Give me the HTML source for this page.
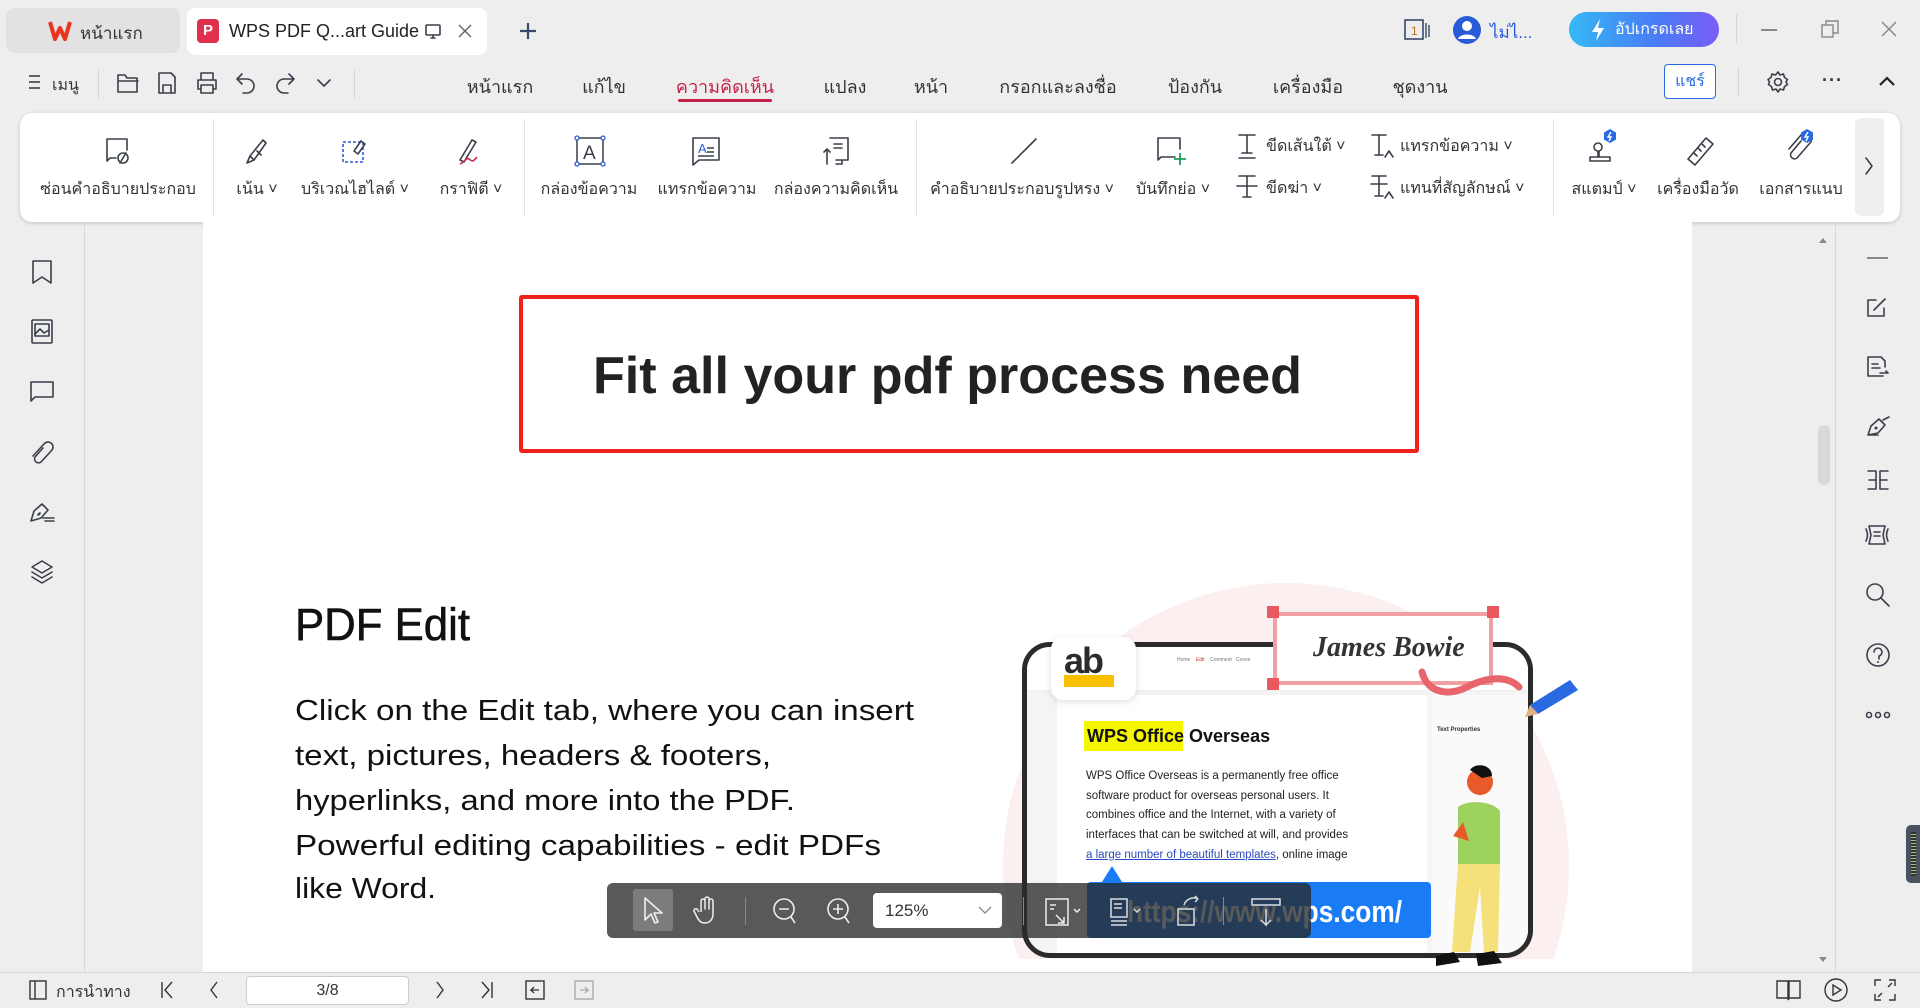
<!DOCTYPE html>
<html><head><meta charset="utf-8">
<style>
*{margin:0;padding:0;box-sizing:border-box}
html{width:1920px;height:1008px;overflow:hidden}
body{width:1920px;height:1008px;overflow:hidden;background:#eeeeee;font-family:"Liberation Sans","Noto Sans CJK SC",sans-serif;color:#333;position:relative}
.a{position:absolute}
.t{position:absolute;white-space:nowrap;transform:translateX(-50%);font-size:16px;color:#333}
svg{position:absolute;overflow:visible}
.ic{fill:none;stroke:#3a3f4a;stroke-width:1.6;stroke-linecap:round;stroke-linejoin:round}
</style></head><body>

<!-- Tab bar -->
<div class="a" style="left:6px;top:8px;width:174px;height:45px;background:#e2e2e2;border-radius:8px"></div>
<svg style="left:48px;top:20px" width="24" height="22" viewBox="0 0 24 22"><path d="M2 2 L7 19 L12 8 L17 19 L22 2" fill="none" stroke="#e8331f" stroke-width="4" stroke-linejoin="round"/></svg>
<div class="a" style="left:80px;top:20px;font-size:17px;color:#333">หน้าแรก</div>
<div class="a" style="left:187px;top:8px;width:300px;height:47px;background:#fff;border-radius:8px"></div>
<div class="a" style="left:197px;top:19px;width:22px;height:24px;background:#e0304d;border-radius:4px;color:#fff;font-weight:bold;font-size:15px;text-align:center;line-height:24px">P</div>
<div class="a" style="left:229px;top:21px;font-size:18px;color:#222">WPS PDF Q...art Guide</div>
<svg style="left:425px;top:24px" width="16" height="16" viewBox="0 0 16 16"><rect x="1" y="1" width="14" height="10" rx="1" class="ic" stroke="#666"/><path d="M6 14h4M8 11v3" class="ic" stroke="#666"/></svg>
<svg style="left:458px;top:24px" width="14" height="14" viewBox="0 0 14 14"><path d="M1 1L13 13M13 1L1 13" stroke="#666" stroke-width="1.5"/></svg>
<svg style="left:519px;top:22px" width="18" height="18" viewBox="0 0 18 18"><path d="M9 1v16M1 9h16" stroke="#3a4a6a" stroke-width="2.2"/></svg>

<!-- top right -->
<svg style="left:1404px;top:19px" width="28" height="22" viewBox="0 0 28 22"><rect x="1" y="1" width="18" height="19" fill="none" stroke="#3a4a6a" stroke-width="1.6"/><text x="7" y="16" font-size="12" fill="#c07020" font-family="Liberation Sans">1</text><path d="M22 4v15M25 6v12" stroke="#3a4a6a" stroke-width="1.4"/></svg>
<svg style="left:1452px;top:15px" width="30" height="30" viewBox="0 0 30 30"><circle cx="15" cy="15" r="14" fill="#2a5bd7"/><circle cx="15" cy="11" r="5" fill="#fff"/><path d="M6 24c2-6 16-6 18 0" fill="#fff"/></svg>
<div class="a" style="left:1490px;top:19px;font-size:17px;color:#2a5bd7">ไม่ไ...</div>
<div class="a" style="left:1569px;top:12px;width:150px;height:35px;border-radius:18px;background:linear-gradient(90deg,#35b8f5,#4a7af5 60%,#7a5cf5);color:#fff;font-size:16px;line-height:35px;padding-left:46px">อัปเกรดเลย</div>
<svg style="left:1590px;top:18px" width="16" height="24" viewBox="0 0 16 24"><path d="M10 1L2 14h6l-2 9 8-13H8z" fill="#fff"/></svg>
<div class="a" style="left:1736px;top:14px;width:1px;height:30px;background:#d8d8d8"></div>
<div class="a" style="left:1761px;top:29px;width:16px;height:1.5px;background:#888"></div>
<svg style="left:1821px;top:20px" width="18" height="18" viewBox="0 0 18 18"><rect x="1" y="5" width="11" height="12" fill="none" stroke="#888" stroke-width="1.4"/><path d="M5 5V1h12v12h-5" fill="none" stroke="#888" stroke-width="1.4"/></svg>
<svg style="left:1881px;top:21px" width="16" height="16" viewBox="0 0 16 16"><path d="M1 1L15 15M15 1L1 15" stroke="#888" stroke-width="1.5"/></svg>

<!-- row 2 -->
<svg style="left:28px;top:74px" width="14" height="16" viewBox="0 0 14 16"><path d="M1 2h11M1 8h11M1 14h11" stroke="#333" stroke-width="1.6"/></svg>
<div class="a" style="left:52px;top:73px;font-size:16px">เมนู</div>
<div class="a" style="left:98px;top:70px;width:1px;height:28px;background:#d5d5d5"></div>
<svg style="left:116px;top:72px" width="24" height="22" viewBox="0 0 24 22"><path d="M2 3h7l2 3h10v14H2z M2 9h20" class="ic"/></svg>
<svg style="left:157px;top:71px" width="20" height="24" viewBox="0 0 20 24"><path d="M2 2h12l4 4v16H2z M6 22v-8h8v8" class="ic" stroke="#aaa"/></svg>
<svg style="left:195px;top:71px" width="24" height="24" viewBox="0 0 24 24"><path d="M6 9V2h12v7 M3 9h18v9h-3 M6 18H3V9 M6 14h12v8H6z" class="ic"/></svg>
<svg style="left:235px;top:72px" width="22" height="22" viewBox="0 0 22 22"><path d="M7 2L2 7l5 5 M2 7h10a7 7 0 0 1 0 14H8" class="ic" stroke="#aaa"/></svg>
<svg style="left:274px;top:72px" width="22" height="22" viewBox="0 0 22 22"><path d="M15 2l5 5-5 5 M20 7H10a7 7 0 0 0 0 14h4" class="ic" stroke="#aaa"/></svg>
<svg style="left:317px;top:78px" width="14" height="10" viewBox="0 0 14 10"><path d="M1 2l6 6 6-6" class="ic"/></svg>
<div class="a" style="left:354px;top:70px;width:1px;height:28px;background:#d5d5d5"></div>

<div class="t" style="left:500px;top:72px;font-size:18px">หน้าแรก</div>
<div class="t" style="left:604px;top:72px;font-size:18px">แก้ไข</div>
<div class="t" style="left:725px;top:72px;font-size:18px;color:#c8224a">ความคิดเห็น</div>
<div class="a" style="left:678px;top:99px;width:94px;height:3px;background:#c8224a;border-radius:2px"></div>
<div class="t" style="left:845px;top:72px;font-size:18px">แปลง</div>
<div class="t" style="left:931px;top:72px;font-size:18px">หน้า</div>
<div class="t" style="left:1058px;top:72px;font-size:18px">กรอกและลงชื่อ</div>
<div class="t" style="left:1195px;top:72px;font-size:18px">ป้องกัน</div>
<div class="t" style="left:1308px;top:72px;font-size:18px">เครื่องมือ</div>
<div class="t" style="left:1420px;top:72px;font-size:18px">ชุดงาน</div>

<div class="a" style="left:1664px;top:64px;width:52px;height:35px;border:1px solid #2a6ae0;border-radius:4px;background:#fff;color:#2a6ae0;font-size:16px;text-align:center;line-height:33px">แชร์</div>
<div class="a" style="left:1738px;top:68px;width:1px;height:28px;background:#d5d5d5"></div>
<svg style="left:1766px;top:70px" width="24" height="24" viewBox="0 0 24 24"><circle cx="12" cy="12" r="3.5" class="ic"/><path d="M12 2l2 3 3.5-1 1 3.5 3 2-1.5 2.5 1.5 2.5-3 2-1 3.5-3.5-1-2 3-2-3-3.5 1-1-3.5-3-2L3.5 12 2 9.5l3-2 1-3.5 3.5 1z" class="ic" stroke-width="1.3"/></svg>
<div class="a" style="left:1822px;top:70px;font-size:18px;letter-spacing:1px;font-weight:bold">···</div>
<svg style="left:1879px;top:76px" width="16" height="10" viewBox="0 0 16 10"><path d="M1 9l7-7 7 7" fill="none" stroke="#222" stroke-width="2.2"/></svg>

<!-- Toolbar panel -->
<div class="a" style="left:20px;top:113px;width:1880px;height:109px;background:#fff;border-radius:12px;box-shadow:0 1px 4px rgba(0,0,0,.18)"></div>
<div class="a" style="left:213px;top:119px;width:1px;height:97px;background:#e2e2e2"></div>
<div class="a" style="left:524px;top:119px;width:1px;height:97px;background:#e2e2e2"></div>
<div class="a" style="left:916px;top:119px;width:1px;height:97px;background:#e2e2e2"></div>
<div class="a" style="left:1553px;top:119px;width:1px;height:97px;background:#e2e2e2"></div>
<div class="a" style="left:1855px;top:118px;width:29px;height:98px;background:#efefef;border-radius:6px"></div>
<svg style="left:1864px;top:157px" width="10" height="18" viewBox="0 0 10 18"><path d="M2 1l6 8-6 8" class="ic"/></svg>

<!-- toolbar icons -->
<svg style="left:104px;top:137px" width="30" height="30" viewBox="0 0 30 30"><path d="M3 24V2h20v11 M3 24l3-3h6" class="ic"/><circle cx="19" cy="21" r="5" class="ic"/><path d="M16 26l6-10" class="ic"/></svg>
<svg style="left:243px;top:136px" width="30" height="30" viewBox="0 0 30 30"><path d="M4 27l3-7 4 4z M7 20L20 4l3 3-12 17 M14 15l4 4" class="ic"/></svg>
<svg style="left:341px;top:136px" width="30" height="30" viewBox="0 0 30 30"><rect x="2" y="6" width="20" height="20" fill="none" stroke="#2a5bd7" stroke-width="1.6" stroke-dasharray="3 2"/><path d="M13 15l7-10 4 3-7 10z" class="ic"/></svg>
<svg style="left:456px;top:136px" width="30" height="30" viewBox="0 0 30 30"><path d="M4 24L16 4l4 2-12 20z" class="ic"/><path d="M4 28c4-1 6-7 9-5s3 4 8-2" fill="none" stroke="#c8224a" stroke-width="1.5"/></svg>
<svg style="left:574px;top:135px" width="32" height="32" viewBox="0 0 32 32"><path d="M3 3h26M3 29h26M3 3v26M29 3v26" stroke="#3a3f4a" stroke-width="1.5"/><text x="9" y="24" font-size="19" fill="#3a3f4a" font-family="Liberation Sans">A</text><g fill="#fff" stroke="#2a5bd7" stroke-width="1.3"><circle cx="3" cy="3" r="2"/><circle cx="29" cy="3" r="2"/><circle cx="3" cy="29" r="2"/><circle cx="29" cy="29" r="2"/></g></svg>
<svg style="left:690px;top:136px" width="32" height="32" viewBox="0 0 32 32"><path d="M3 2h26v22H9l-6 5z" class="ic"/><text x="8" y="17" font-size="13" fill="#2a5bd7" font-family="Liberation Sans">A</text><path d="M17 12h7M17 16h7M8 20h16" stroke="#3a3f4a" stroke-width="1.4"/></svg>
<svg style="left:820px;top:136px" width="32" height="32" viewBox="0 0 32 32"><path d="M10 2h18v22H16 M22 24v4h-6 M14 8h8M14 12h8" class="ic"/><path d="M7 28V13l-3 3M7 13l3 3" class="ic"/></svg>
<svg style="left:1010px;top:137px" width="28" height="28" viewBox="0 0 28 28"><path d="M26 2L2 26" class="ic"/></svg>
<svg style="left:1156px;top:136px" width="32" height="32" viewBox="0 0 32 32"><path d="M24 13V2H2v22l3-3h14" class="ic"/><path d="M24 17v12M18 23h12" stroke="#1a9e5a" stroke-width="1.8"/></svg>
<svg style="left:1236px;top:133px" width="22" height="26" viewBox="0 0 22 26"><path d="M3 2h16M11 2v18M6 20h10M3 25h16" class="ic"/></svg>
<svg style="left:1236px;top:174px" width="22" height="26" viewBox="0 0 22 26"><path d="M3 2h16M11 2v21M1 12h20M7 23h8" class="ic"/></svg>
<svg style="left:1370px;top:133px" width="26" height="26" viewBox="0 0 26 26"><path d="M2 2h14M9 2v20M5 22h8M15 24l4-6 4 6" class="ic"/></svg>
<svg style="left:1370px;top:174px" width="26" height="26" viewBox="0 0 26 26"><path d="M2 2h14M9 2v20M5 22h8M1 10h16M15 24l4-6 4 6" class="ic"/></svg>
<svg style="left:1586px;top:127px" width="36" height="38" viewBox="0 0 36 38"><path d="M12 30v-6a4 4 0 0 1 0-8 4 4 0 0 1 4 4 4 4 0 0 1-3 4v6 M4 30h20v4H4z" class="ic"/><path d="M24 2l6 3.5v7L24 16l-6-3.5v-7z" fill="#2a6ae0"/><path d="M25 5l-3 5h3l-2 4" stroke="#fff" stroke-width="1.4" fill="none"/></svg>
<svg style="left:1684px;top:135px" width="32" height="32" viewBox="0 0 32 32"><path d="M4 24L22 3l7 6-18 21z M10 18l3 3M14 13l3 3M18 9l3 3" class="ic"/></svg>
<svg style="left:1783px;top:127px" width="36" height="38" viewBox="0 0 36 38"><path d="M18 14L8 26a4 4 0 0 0 6 5l13-15a6 6 0 0 0-9-8L6 22" class="ic" stroke-width="1.8"/><path d="M24 2l6 3.5v7L24 16l-6-3.5v-7z" fill="#2a6ae0"/><path d="M25 5l-3 5h3l-2 4" stroke="#fff" stroke-width="1.4" fill="none"/></svg>

<div class="t" style="left:118px;top:177px">ซ่อนคำอธิบายประกอบ</div>
<div class="t" style="left:257px;top:177px">เน้น ˅</div>
<div class="t" style="left:355px;top:177px">บริเวณไฮไลต์ ˅</div>
<div class="t" style="left:471px;top:177px">กราฟิตี ˅</div>
<div class="t" style="left:589px;top:177px">กล่องข้อความ</div>
<div class="t" style="left:707px;top:177px">แทรกข้อความ</div>
<div class="t" style="left:836px;top:177px">กล่องความคิดเห็น</div>
<div class="t" style="left:1022px;top:177px">คำอธิบายประกอบรูปหรง ˅</div>
<div class="t" style="left:1173px;top:177px">บันทึกย่อ ˅</div>
<div class="a" style="left:1266px;top:134px;font-size:16px">ขีดเส้นใต้ ˅</div>
<div class="a" style="left:1266px;top:176px;font-size:16px">ขีดฆ่า ˅</div>
<div class="a" style="left:1400px;top:134px;font-size:16px">แทรกข้อความ ˅</div>
<div class="a" style="left:1400px;top:176px;font-size:16px">แทนที่สัญลักษณ์ ˅</div>
<div class="t" style="left:1604px;top:177px">สแตมป์ ˅</div>
<div class="t" style="left:1698px;top:177px">เครื่องมือวัด</div>
<div class="t" style="left:1801px;top:177px">เอกสารแนบ</div>

<!-- left sidebars -->
<div class="a" style="left:84px;top:222px;width:1px;height:750px;background:#d8d8d8"></div>
<svg style="left:30px;top:259px" width="24" height="26" viewBox="0 0 24 26"><path d="M3 2h18v22l-9-6-9 6z" class="ic"/></svg>
<svg style="left:30px;top:319px" width="24" height="26" viewBox="0 0 24 26"><rect x="2" y="1" width="20" height="23" rx="1" class="ic"/><rect x="5" y="5" width="14" height="12" class="ic"/><path d="M5 15l5-5 4 4 5-3" class="ic"/></svg>
<svg style="left:29px;top:380px" width="26" height="24" viewBox="0 0 26 24"><path d="M2 2h22v15H6l-4 4z" class="ic"/></svg>
<svg style="left:30px;top:440px" width="26" height="26" viewBox="0 0 26 26"><path d="M13 8L5 17a4 4 0 0 0 6 5l11-12a5 5 0 0 0-8-6L3 16" class="ic"/></svg>
<svg style="left:29px;top:499px" width="28" height="26" viewBox="0 0 28 26"><path d="M2 22l3-10 8-7 6 6-7 8z M9 16l2-2 M14 19h11M16 22h9" class="ic"/><circle cx="10" cy="15" r="1.3" fill="#3a3f4a"/></svg>
<svg style="left:29px;top:559px" width="26" height="26" viewBox="0 0 26 26"><path d="M13 2l10 6-10 6L3 8z M3 13l10 6 10-6 M3 18l10 6 10-6" class="ic"/></svg>
<div class="a" style="left:203px;top:222px;width:1489px;height:750px;background:#fff;overflow:hidden">

<!-- page content (coords relative: subtract 203,222) -->
<div class="a" style="left:316px;top:73px;width:900px;height:158px;border:4px solid #f0211c;border-radius:3px"></div>
<svg style="left:-203px;top:-222px" width="1920" height="1008">
<text x="593" y="393" font-size="52" font-weight="bold" fill="#222" textLength="709" lengthAdjust="spacingAndGlyphs" font-family="Liberation Sans">Fit all your pdf process need</text>
<text x="295" y="640" font-size="45" fill="#111" stroke="#111" stroke-width="0.6" textLength="175" lengthAdjust="spacingAndGlyphs" font-family="Liberation Sans">PDF Edit</text>
<g font-size="29" fill="#111" font-family="Liberation Sans">
<text x="295" y="720" textLength="619" lengthAdjust="spacingAndGlyphs">Click on the Edit tab, where you can insert</text>
<text x="295" y="765" textLength="476" lengthAdjust="spacingAndGlyphs">text, pictures, headers &amp; footers,</text>
<text x="295" y="810" textLength="500" lengthAdjust="spacingAndGlyphs">hyperlinks, and more into the PDF.</text>
<text x="295" y="855" textLength="586" lengthAdjust="spacingAndGlyphs">Powerful editing capabilities - edit PDFs</text>
<text x="295" y="898" textLength="141" lengthAdjust="spacingAndGlyphs">like Word.</text>
</g>
</svg>

<!-- illustration -->
<div class="a" style="left:800px;top:361px;width:566px;height:376px;overflow:hidden">
  <div class="a" style="left:0;top:0;width:566px;height:566px;border-radius:50%;background:#fbeff0"></div>
</div>
<div class="a" style="left:819px;top:420px;width:511px;height:316px;border:5px solid #2b2b2b;border-radius:28px;background:#f4f4f4;overflow:hidden">
  <div class="a" style="left:0;top:0;width:501px;height:44px;background:#fff;border-bottom:1px solid #eee"></div>
  <div class="a" style="left:30px;top:48px;width:370px;height:260px;background:#fff"></div>
  <div class="a" style="left:405px;top:48px;width:100px;height:260px;background:#fafafa"></div>
  <div class="a" style="left:410px;top:80px;font-size:6px;color:#333;font-weight:bold">Text Properties</div>
  <div class="a" style="left:150px;top:10px;font-size:5px;color:#777">Home &nbsp;&nbsp; <span style="color:#c33">Edit</span> &nbsp;&nbsp; Comment &nbsp; Conve</div>
</div>
<div class="a" style="left:848px;top:415px;width:85px;height:63px;background:#fff;border-radius:12px;box-shadow:0 2px 8px rgba(0,0,0,.12)"></div>
<div class="a" style="left:861px;top:453px;width:50px;height:12px;background:#f8c000"></div>
<div class="a" style="left:861px;top:418px;font-size:36px;font-weight:bold;color:#2b2b2b;letter-spacing:-2px">ab</div>
<div class="a" style="left:881px;top:499px;width:99px;height:30px;background:#f6f500"></div>
<div class="a" style="left:884px;top:504px;font-size:18px;font-weight:bold;color:#111">WPS Office Overseas</div>
<div class="a" style="left:883px;top:545px;font-size:11.5px;line-height:19.7px;color:#222">WPS Office Overseas is a permanently free office<br>software product for overseas personal users. It<br>combines office and the Internet, with a variety of<br>interfaces that can be switched at will, and provides<br><span style="color:#2a4ac0;text-decoration:underline">a large number of beautiful templates</span>, online image</div>
<div class="a" style="left:1070px;top:390px;width:220px;height:73px;border:4px solid #f0a0a2;background:#fff"></div>
<div class="a" style="left:1064px;top:384px;width:12px;height:12px;background:#e85a5f"></div>
<div class="a" style="left:1284px;top:384px;width:12px;height:12px;background:#e85a5f"></div>
<div class="a" style="left:1064px;top:456px;width:12px;height:12px;background:#e85a5f"></div>
<div class="a" style="left:1110px;top:410px;font-size:28px;font-style:italic;font-weight:bold;color:#333;font-family:'Liberation Serif',serif">James Bowie</div>
<svg style="left:1217px;top:448px" width="160" height="50" viewBox="0 0 160 50"><path d="M2 2c5 20 25 25 45 15s40-12 52 0" fill="none" stroke="#e8666b" stroke-width="7" stroke-linecap="round"/><path d="M110 35l40-25 8 10-40 24z" fill="#2a6ae0"/><path d="M110 35l-5 12 13-3z" fill="#e0b080"/></svg>
<svg style="left:897px;top:644px" width="24" height="16" viewBox="0 0 24 16"><path d="M12 0l10 16H2z" fill="#1a7cf5"/></svg>
<div class="a" style="left:884px;top:660px;width:344px;height:56px;background:#1a7cf5;border-radius:4px"></div>
<svg style="left:-203px;top:-222px" width="1920" height="1008"><text x="1127" y="922" font-size="31" font-weight="bold" fill="#fff" textLength="275" lengthAdjust="spacingAndGlyphs" font-family="Liberation Sans">https://www.wps.com/</text></svg>
<svg style="left:1215px;top:530px" width="110" height="220" viewBox="0 0 110 220"><circle cx="62" cy="30" r="13" fill="#e85a2a"/><path d="M52 18c5-8 22-6 22 6l-10 2z" fill="#111"/><path d="M40 55c10-8 35-6 42 4v55H40z" fill="#9dd35c"/><path d="M40 112h42l-2 88H66l-4-65-10 65H34z" fill="#f6e07a"/><path d="M18 204l18-4 6 10-24 4z M58 202l18-3 8 12-24 3z" fill="#111"/><path d="M45 70l-10 14 16 5" fill="#e85a2a"/></svg>
</div>

<!-- right sidebar -->
<div class="a" style="left:1835px;top:222px;width:1px;height:750px;background:#d8d8d8"></div>
<div class="a" style="left:1818px;top:425px;width:12px;height:60px;background:#d9d9d9;border-radius:6px"></div>
<svg style="left:1818px;top:236px" width="10" height="8" viewBox="0 0 10 8"><path d="M1 7l4-5 4 5z" fill="#888"/></svg>
<svg style="left:1818px;top:956px" width="10" height="8" viewBox="0 0 10 8"><path d="M1 1l4 5 4-5z" fill="#888"/></svg>
<div class="a" style="left:1867px;top:257px;width:21px;height:2px;background:#888"></div>
<svg style="left:1866px;top:296px" width="22" height="22" viewBox="0 0 22 22"><path d="M10 4H2v16h16v-8 M8 14l11-11" class="ic"/></svg>
<svg style="left:1866px;top:355px" width="24" height="24" viewBox="0 0 24 24"><path d="M2 2h13l4 4v6 M2 2v19h15 M6 9h6M6 13h8 M14 18h8l-2-2" class="ic"/></svg>
<svg style="left:1866px;top:414px" width="26" height="24" viewBox="0 0 26 24"><path d="M2 21l3-9 8-7 6 6-7 8z M2 21h10 M17 6l6-3" class="ic"/><circle cx="10" cy="14" r="1.5" fill="#3a3f4a"/></svg>
<svg style="left:1866px;top:469px" width="24" height="22" viewBox="0 0 24 22"><path d="M2 2h8v18H2 M10 11H3 M22 2h-8v18h8 M14 11h7" class="ic"/></svg>
<svg style="left:1864px;top:524px" width="26" height="22" viewBox="0 0 26 22"><path d="M5 2h16l-2 9 2 9H5l2-9z M10 8h6M10 12h6 M2 5c2 4 2 8 0 12 M24 5c-2 4-2 8 0 12" class="ic"/></svg>
<svg style="left:1865px;top:582px" width="26" height="26" viewBox="0 0 26 26"><circle cx="10" cy="10" r="8" class="ic"/><path d="M16 16l8 8" class="ic"/></svg>
<svg style="left:1865px;top:642px" width="26" height="26" viewBox="0 0 26 26"><circle cx="13" cy="13" r="11" class="ic"/><path d="M9 10a4 4 0 1 1 5 4v3" class="ic"/><circle cx="13" cy="20" r="1" fill="#3a3f4a"/></svg>
<svg style="left:1865px;top:711px" width="26" height="8" viewBox="0 0 26 8"><circle cx="4" cy="4" r="2.5" class="ic"/><circle cx="13" cy="4" r="2.5" class="ic"/><circle cx="22" cy="4" r="2.5" class="ic"/></svg>
<div class="a" style="left:1906px;top:825px;width:14px;height:58px;background:#4a5260;border-radius:5px 0 0 5px"></div>
<div class="a" style="left:1911px;top:832px;width:5px;height:44px;background:repeating-linear-gradient(#2c333d 0 2px,#a5c85a 2px 3px)"></div>

<!-- floating toolbar -->
<div class="a" style="left:607px;top:883px;width:704px;height:55px;background:rgba(40,42,44,0.78);border-radius:6px"></div>
<div class="a" style="left:633px;top:889px;width:40px;height:42px;background:#7c7c7c;border-radius:3px"></div>
<svg style="left:642px;top:896px" width="22" height="28" viewBox="0 0 22 28"><path d="M3 2v22l6-6 4 9 3-1-4-9h8z" fill="none" stroke="#eee" stroke-width="1.6" stroke-linejoin="round"/></svg>
<svg style="left:694px;top:896px" width="24" height="28" viewBox="0 0 24 28"><path d="M7 16V5a2 2 0 0 1 4 0v8V3a2 2 0 0 1 4 0v10V5a2 2 0 0 1 4 0v13c0 6-4 9-8 9s-6-2-8-6l-3-6a2 2 0 0 1 3-2l2 3" fill="none" stroke="#eee" stroke-width="1.5" stroke-linejoin="round"/></svg>
<div class="a" style="left:745px;top:897px;width:1px;height:28px;background:#888"></div>
<svg style="left:772px;top:897px" width="28" height="30" viewBox="0 0 28 30"><circle cx="12" cy="12" r="10" fill="none" stroke="#eee" stroke-width="1.6"/><path d="M7 12h10M19 20l4 6" stroke="#eee" stroke-width="1.6"/></svg>
<svg style="left:826px;top:897px" width="28" height="30" viewBox="0 0 28 30"><circle cx="12" cy="12" r="10" fill="none" stroke="#eee" stroke-width="1.6"/><path d="M7 12h10M12 7v10M19 20l4 6" stroke="#eee" stroke-width="1.6"/></svg>
<div class="a" style="left:873px;top:893px;width:129px;height:35px;background:#fff;border-radius:4px"></div>
<div class="a" style="left:885px;top:901px;font-size:17px;color:#333">125%</div>
<svg style="left:978px;top:905px" width="14" height="10" viewBox="0 0 14 10"><path d="M1 2l6 6 6-6" fill="none" stroke="#888" stroke-width="1.3"/></svg>
<div class="a" style="left:1023px;top:897px;width:1px;height:28px;background:#888"></div>
<svg style="left:1044px;top:897px" width="40" height="30" viewBox="0 0 40 30"><path d="M2 2h22v26H2z M6 8h6M6 12h4 M12 18l8 8M20 20v6h-6" fill="none" stroke="#eee" stroke-width="1.5"/><path d="M30 12l3 3 3-3" fill="none" stroke="#eee" stroke-width="1.5"/></svg>
<svg style="left:1108px;top:897px" width="40" height="30" viewBox="0 0 40 30"><path d="M3 2h16v18H3z M6 7h8M6 11h8 M3 24h16 M3 28h16" fill="none" stroke="#ddd" stroke-width="1.5"/><path d="M26 12l3 3 3-3" fill="none" stroke="#ddd" stroke-width="1.5"/></svg>
<svg style="left:1174px;top:895px" width="30" height="32" viewBox="0 0 30 32"><path d="M4 14h16v16H4z M10 10a10 10 0 0 1 14-6l-3-3M24 4l-3 3" fill="none" stroke="#ddd" stroke-width="1.5"/></svg>
<div class="a" style="left:1223px;top:897px;width:1px;height:28px;background:#888"></div>
<svg style="left:1250px;top:897px" width="32" height="30" viewBox="0 0 32 30"><path d="M2 2h28v6H2z M16 12v16l-5-5M16 28l5-5" fill="none" stroke="#ddd" stroke-width="1.5"/></svg>

<!-- bottom bar -->
<div class="a" style="left:0;top:972px;width:1920px;height:1px;background:#d8d8d8"></div>
<svg style="left:29px;top:980px" width="18" height="20" viewBox="0 0 18 20"><rect x="1" y="1" width="16" height="18" fill="none" stroke="#333" stroke-width="1.4"/><path d="M6 1v18" stroke="#333" stroke-width="1.4"/></svg>
<div class="a" style="left:56px;top:980px;font-size:16px">การนำทาง</div>
<svg style="left:160px;top:981px" width="14" height="18" viewBox="0 0 14 18"><path d="M2 1v16M12 1L5 9l7 8" fill="none" stroke="#333" stroke-width="1.4"/></svg>
<svg style="left:208px;top:981px" width="12" height="18" viewBox="0 0 12 18"><path d="M9 1L3 9l6 8" fill="none" stroke="#333" stroke-width="1.4"/></svg>
<div class="a" style="left:246px;top:976px;width:163px;height:29px;background:#fff;border:1px solid #ccc;border-radius:4px;text-align:center;font-size:16px;line-height:27px">3/8</div>
<svg style="left:434px;top:981px" width="12" height="18" viewBox="0 0 12 18"><path d="M3 1l6 8-6 8" fill="none" stroke="#333" stroke-width="1.4"/></svg>
<svg style="left:480px;top:981px" width="14" height="18" viewBox="0 0 14 18"><path d="M2 1l7 8-7 8M12 1v16" fill="none" stroke="#333" stroke-width="1.4"/></svg>
<svg style="left:525px;top:980px" width="20" height="20" viewBox="0 0 20 20"><rect x="1" y="1" width="18" height="18" fill="none" stroke="#333" stroke-width="1.4"/><path d="M14 10H6l3-3M6 10l3 3" fill="none" stroke="#333" stroke-width="1.3"/></svg>
<svg style="left:574px;top:980px" width="20" height="20" viewBox="0 0 20 20"><rect x="1" y="1" width="18" height="18" fill="none" stroke="#aaa" stroke-width="1.4"/><path d="M6 10h8l-3-3M14 10l-3 3" fill="none" stroke="#aaa" stroke-width="1.3"/></svg>
<svg style="left:1776px;top:979px" width="26" height="22" viewBox="0 0 26 22"><path d="M1 2h11v17H1z M13 2h11v17H13z M11 19l2 2" fill="none" stroke="#333" stroke-width="1.4"/></svg>
<svg style="left:1824px;top:978px" width="24" height="24" viewBox="0 0 24 24"><circle cx="12" cy="12" r="11" fill="none" stroke="#333" stroke-width="1.4"/><path d="M9 7v10l8-5z" fill="none" stroke="#333" stroke-width="1.4"/></svg>
<svg style="left:1874px;top:979px" width="22" height="22" viewBox="0 0 22 22"><path d="M1 7V1h6 M15 1h6v6 M21 15v6h-6 M7 21H1v-6 M4 18l4-4 M18 4l-4 4" fill="none" stroke="#333" stroke-width="1.4"/></svg>
</body></html>
